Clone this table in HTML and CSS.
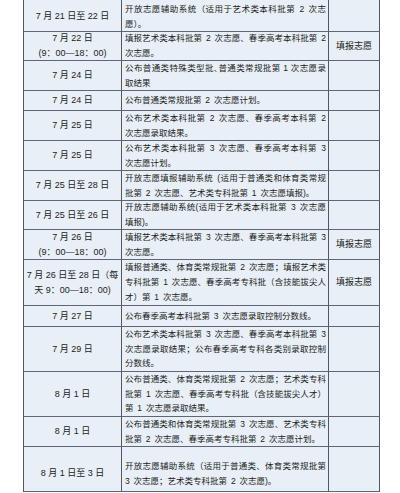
FILE: index.html
```html
<!DOCTYPE html>
<html lang="zh-CN">
<head>
<meta charset="utf-8">
<title>志愿填报时间安排</title>
<link rel="stylesheet" href="styles.css">
</head>
<body>
<div class="tbl">
  <div class="c1 first">7 月 21 日至 22 日</div>
  <div class="c2 first"><div class="j">开放志愿辅助系统（适用于艺术类本科批第 2 次志</div><div>愿）。</div></div>
  <div class="c3 first"></div>

  <div class="c1">7 月 22 日<br>(9：00—18：00)</div>
  <div class="c2"><div class="j">填报艺术类本科批第 2 次志愿、春季高考本科批第 2</div><div>次志愿。</div></div>
  <div class="c3">填报志愿</div>

  <div class="c1">7 月 24 日</div>
  <div class="c2"><div class="j tight">公布普通类特殊类型批<span class="half">、</span>普通类常规批第 1 次志愿录</div><div>取结果</div></div>
  <div class="c3"></div>

  <div class="c1">7 月 24 日</div>
  <div class="c2"><div>公布普通类常规批第 2 次志愿计划。</div></div>
  <div class="c3"></div>

  <div class="c1">7 月 25 日</div>
  <div class="c2"><div class="j">公布艺术类本科批第 2 次志愿、春季高考本科第 2</div><div>次志愿录取结果。</div></div>
  <div class="c3"></div>

  <div class="c1">7 月 25 日</div>
  <div class="c2"><div class="j">公布艺术类本科批第 3 次志愿、春季高考本科第 3</div><div>次志愿计划。</div></div>
  <div class="c3"></div>

  <div class="c1">7 月 25 日至 28 日</div>
  <div class="c2"><div class="j">开放志愿填报辅助系统 (适用于普通类和体育类常规</div><div>批第 2 次志愿、艺术类专科批第 1 次志愿填报)。</div></div>
  <div class="c3"></div>

  <div class="c1">7 月 25 日至 26 日</div>
  <div class="c2"><div class="j">开放志愿辅助系统(适用于艺术类本科批第 3 次志愿</div><div>填报)。</div></div>
  <div class="c3"></div>

  <div class="c1">7 月 26 日<br>(9：00—18：00)</div>
  <div class="c2"><div class="j">填报艺术类本科批第 3 次志愿、春季高考本科批第 3</div><div>次志愿。</div></div>
  <div class="c3">填报志愿</div>

  <div class="c1">7 月 26 日至 28 日（每<br>天 9：00—18：00)</div>
  <div class="c2"><div class="j">填报普通类、体育类常规批第 2 次志愿；填报艺术类</div><div class="j">专科批第 1 次志愿、春季高考专科批（含技能拔尖人</div><div>才）第 1 次志愿。</div></div>
  <div class="c3">填报志愿</div>

  <div class="c1">7 月 27 日</div>
  <div class="c2"><div>公布春季高考本科批第 3 次志愿录取控制分数线。</div></div>
  <div class="c3"></div>

  <div class="c1">7 月 29 日</div>
  <div class="c2"><div class="j">公布艺术类本科批第 3 次志愿、春季高考本科批第 3</div><div class="j">次志愿录取结果；公布春季高考专科各类别录取控制</div><div>分数线。</div></div>
  <div class="c3"></div>

  <div class="c1">8 月 1 日</div>
  <div class="c2"><div class="j">公布普通类、体育类常规批第 2 次志愿；艺术类专科</div><div class="j">批第 1 次志愿、春季高考专科批（含技能拔尖人才）</div><div>第 1 次志愿录取结果。</div></div>
  <div class="c3"></div>

  <div class="c1">8 月 1 日</div>
  <div class="c2"><div class="j">公布普通类和体育类常规批第 3 次志愿、艺术类专科</div><div>批第 2 次志愿、春季高考专科批第 2 次志愿计划。</div></div>
  <div class="c3"></div>

  <div class="c1 last">8 月 1 日至 3 日</div>
  <div class="c2 last"><div class="j">开放志愿辅助系统（适用于普通类、体育类常规批第</div><div>3 次志愿；艺术类专科批第 2 次志愿)。</div></div>
  <div class="c3 last"></div>
</div>
</body>
</html>
```

FILE: styles.css
```css
html, body {
  margin: 0;
  padding: 0;
  background: #ffffff;
}

.tbl {
  display: grid;
  grid-template-columns: 98px 207px 51px;
  grid-template-rows: 32px 29px 30px 20px 30px 30px 30px 29px 30px 46px 21px 45px 45px 30px 45px;
  width: max-content;
  margin-left: 23px;
  border-left: 1px solid #4f5965;
  background: #e8eff7;
  color: #1b1d20;
  font-family: "Liberation Sans", "Noto Sans CJK SC", sans-serif;
  line-height: 14.7px;
}

.c1, .c2, .c3 {
  box-sizing: border-box;
  border-right: 1px solid #4f5965;
  border-bottom: 1px solid #5d6874;
  min-width: 0;
}

.c1, .c3 {
  display: flex;
  align-items: center;
  justify-content: center;
  text-align: center;
  white-space: nowrap;
  font-size: 9px;
}

.c2 {
  display: flex;
  flex-direction: column;
  justify-content: center;
  padding: 0 2px 0 3px;
  font-size: 8.5px;
  word-spacing: 1.5px;
}

.c2 .j {
  text-align: justify;
  text-align-last: justify;
}

.c2 .tight {
  word-spacing: 0;
}

.half {
  font-feature-settings: "halt";
}

.first {
  padding-top: 2px;
}

.last {
  padding-top: 9px;
}
```
